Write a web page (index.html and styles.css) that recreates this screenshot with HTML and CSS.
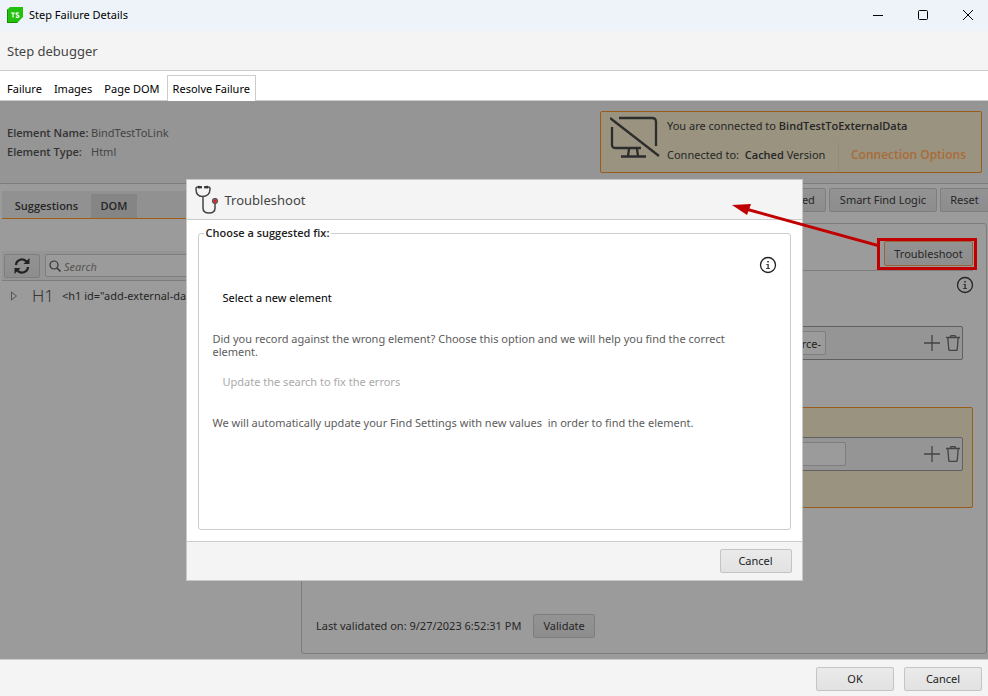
FILE: index.html
```html
<!DOCTYPE html>
<html lang="en">
<head>
<meta charset="utf-8">
<title>Step Failure Details</title>
<link rel="stylesheet" href="styles.css">
</head>
<body>
<svg class="defs" aria-hidden="true">
  <symbol id="info" viewBox="0 0 18 18"><circle cx="9" cy="9" r="7.5" fill="none" stroke="currentColor" stroke-width="1.3"/><path d="M8.300 5h1.500v1.500H8.300zM7.200 8h2.500v4.200h1.300v.8H7v-.8h1.500V8.800H7.200z" fill="currentColor"/></symbol>
  <symbol id="plus" viewBox="0 0 16 16"><path d="M8 0v16M0 8h16" stroke="currentColor" stroke-width="1.3"/></symbol>
  <symbol id="trash" viewBox="0 0 14 16"><path d="M0 2.500h14M4 2.500L5 .6h4l1 1.900M1.800 2.500l1 12.200q.1.700.8.700h6.800q.7 0 .8-.7l1-12.200" fill="none" stroke="currentColor" stroke-width="1.3"/></symbol>
</svg>

<header class="titlebar">
  <svg class="logo" viewBox="0 0 16 16" aria-hidden="true"><path d="M3 0h13v10l-6 6H0V3z" fill="#22c10b"/><path d="M0 3v13h10l1-1H1V2z" fill="#158a08"/><path d="M4 6h4M6 6v4.500" stroke="#fff" stroke-width="1.200"/><path d="M12 6.200c-1.200-.5-3-.5-3 .8s3 1 3 2.300-1.900 1.300-3.200.6" fill="none" stroke="#fff" stroke-width="1.200"/></svg>
  <h1 class="title">Step Failure Details</h1>
  <div class="window-buttons">
    <button type="button" aria-label="Minimize"><svg viewBox="0 0 12 12"><path d="M1 6.500h10"/></svg></button>
    <button type="button" aria-label="Maximize"><svg viewBox="0 0 12 12"><rect x="1.500" y="1.500" width="9" height="9" rx="1"/></svg></button>
    <button type="button" aria-label="Close"><svg viewBox="0 0 12 12"><path d="M1 1l10 10M11 1L1 11"/></svg></button>
  </div>
</header>
<h2 class="subtitle">Step debugger</h2>
<nav class="tabs">
  <button type="button" class="tab">Failure</button>
  <button type="button" class="tab">Images</button>
  <button type="button" class="tab">Page DOM</button>
  <button type="button" class="tab active">Resolve Failure</button>
</nav>

<main class="workspace">
  <section class="summary">
    <dl class="element-info">
      <dt>Element Name:</dt><dd>BindTestToLink</dd>
      <dt>Element Type:</dt><dd>Html</dd>
    </dl>
    <div class="connection">
      <svg class="monitor" viewBox="0 0 50 44" aria-hidden="true"><path d="M9 2h33q4 0 4 4v24M2 11v18q0 3 4 3h25M19 33l-1 7M27 33l1 7M11 40.500h25M0 2l49 38" fill="none" stroke="#2d2d2d" stroke-width="2.300"/></svg>
      <div class="connection-text">
        <p>You are connected to <b>BindTestToExternalData</b></p>
        <div class="connection-row">
          <p class="version">Connected to:&nbsp; <b>Cached</b> Version</p>
          <a class="options" href="#">Connection Options</a>
        </div>
      </div>
    </div>
  </section>

  <div class="columns">
    <section class="left">
      <div class="side-tabs">
        <button type="button" class="side-tab">Suggestions</button>
        <button type="button" class="side-tab selected">DOM</button>
      </div>
      <div class="search-bar">
        <button type="button" class="dim-button refresh" aria-label="Refresh"><svg viewBox="0 0 16 16"><path d="M2 7a6 6 0 0 1 10.500-3.500M14 9a6 6 0 0 1-10.500 3.500" fill="none" stroke="#222" stroke-width="2.300"/><path d="M15.500 0v6h-6zM.5 16v-6h6z" fill="#222"/></svg></button>
        <label class="search"><svg viewBox="0 0 12 12" aria-hidden="true"><circle cx="5" cy="5" r="4" fill="none" stroke="#333" stroke-width="1.200"/><path d="M8 8l3.500 3.500" stroke="#333" stroke-width="1.400"/></svg><input type="search" placeholder="Search" aria-label="Search"></label>
      </div>
      <div class="tree-row">
        <svg class="caret" viewBox="0 0 8 10" aria-hidden="true"><path d="M1.500 1v8L6.500 5z" fill="none" stroke="#555"/></svg>
        <span class="tag">H1</span>
        <span>&lt;h1 id="add-external-dat</span>
      </div>
    </section>

    <section class="right">
      <div class="toolbar">
        <button type="button" class="dim-button covered">ed</button>
        <button type="button" class="dim-button">Smart Find Logic</button>
        <button type="button" class="dim-button reset">Reset</button>
      </div>
      <div class="panel">
        <div class="panel-head">
          <div class="callout">
            <svg class="arrow" viewBox="0 0 150 50" aria-hidden="true"><path d="M150 46L14 8.500" stroke="#c00000" stroke-width="3"/><path d="M2 5l19-1-4 11z" fill="#c00000"/></svg>
            <button type="button" class="dim-button trouble">Troubleshoot</button>
          </div>
        </div>
        <svg class="info panel-info" role="img" aria-label="Information"><use href="#info"/></svg>
        <div class="rule first">
          <input type="text" value="rce-" aria-label="Attribute value">
          <button type="button" class="icon-button" aria-label="Add"><svg class="plus"><use href="#plus"/></svg></button>
          <button type="button" class="icon-button" aria-label="Delete"><svg class="trash"><use href="#trash"/></svg></button>
        </div>
        <div class="warning">
          <div class="rule second">
            <input type="text" aria-label="Text value">
            <button type="button" class="icon-button" aria-label="Add"><svg class="plus"><use href="#plus"/></svg></button>
            <button type="button" class="icon-button" aria-label="Delete"><svg class="trash"><use href="#trash"/></svg></button>
          </div>
        </div>
        <div class="validation">
          <span>Last validated on: 9/27/2023 6:52:31 PM</span>
          <button type="button" class="dim-button">Validate</button>
        </div>
      </div>
    </section>
  </div>

  <div class="overlay">
    <div class="dialog" role="dialog" aria-labelledby="dialog-title">
      <header class="dialog-head">
        <svg class="stethoscope" viewBox="0 0 24 30" aria-hidden="true"><path d="M5 2H2.500Q1 2 1 4c0 5 2.500 7.500 6.500 7.500S15 9 15 4q0-2-1.500-2H11M8 11.500V23c0 3 2 5 6 5s6-2 6-5v-4" fill="none" stroke="#444" stroke-width="1.500"/><path d="M3 .7l4 .5v2L3 3.500zM13 .7l-4 .5v2l4 .3z" fill="#333"/><circle cx="20" cy="16" r="2.700" fill="#777" stroke="#555"/><circle cx="20" cy="16" r="1.700" fill="#e02020"/></svg>
        <h2 id="dialog-title">Troubleshoot</h2>
      </header>
      <div class="dialog-body">
        <fieldset>
          <legend>Choose a suggested fix:</legend>
          <svg class="info dialog-info" role="img" aria-label="Information"><use href="#info"/></svg>
          <button type="button" class="choice">Select a new element</button>
          <p class="hint">Did you record against the wrong element? Choose this option and we will help you find the correct element.</p>
          <button type="button" class="choice" disabled>Update the search to fix the errors</button>
          <p class="hint">We will automatically update your Find Settings with new values&nbsp; in order to find the element.</p>
        </fieldset>
      </div>
      <footer class="dialog-foot"><button type="button" class="button small">Cancel</button></footer>
    </div>
  </div>
</main>

<footer class="window-foot">
  <button type="button" class="button">OK</button>
  <button type="button" class="button">Cancel</button>
</footer>
</body>
</html>
```
FILE: styles.css
```css
* { box-sizing: border-box; }
body {
  margin: 0;
  min-height: 100vh;
  display: flex;
  flex-direction: column;
  font: 11px/16px "Segoe UI", "Noto Sans", "Open Sans", sans-serif;
  color: #000;
  background: #f4f4f4;
}
h1, h2, p, dl, dd { margin: 0; font-weight: 400; }
button, input { font: inherit; color: inherit; }
button { padding: 0; border: 0; background: none; white-space: nowrap; }
b, dt, legend, .options, .side-tab { font-family: "Segoe UI", "Open Sans", sans-serif; font-weight: 600; }
svg { display: block; flex: none; }
.defs { position: absolute; width: 0; height: 0; }

.titlebar { display: flex; align-items: center; height: 31px; padding: 0 0 2px 7px; background: #eef3f9; }
.logo { width: 16px; height: 16px; }
.title { margin-left: 6px; font-size: 11px; }
.window-buttons { display: flex; margin-left: auto; }
.window-buttons button { display: grid; place-items: center; width: 45px; height: 28px; }
.window-buttons svg { width: 12px; height: 12px; fill: none; stroke: #000; }
.window-buttons button:last-child { width: 43px; padding-left: 3px; }
.subtitle { height: 40px; padding-left: 7px; line-height: 40px; font-size: 13px; color: #444; border-bottom: 1px solid #ccc; }
.tabs { display: flex; align-items: flex-end; height: 30px; background: #fff; border-bottom: 1px solid #ccc; }
.tab { height: 25px; padding: 1px 6px 0; border: 1px solid transparent; border-bottom: 0; margin-right: -2px; }
.tab.active { height: 26px; padding: 0 5px; margin: 0 0 -1px 2px; border-color: #ccc; background: #fff; }

.workspace { position: relative; flex: 1; display: flex; flex-direction: column; background: #9b9b9b; color: #262626; }
.summary { display: flex; justify-content: space-between; align-items: flex-start; height: 83px; padding: 10px 6px 0 7px; background: #959595; border-bottom: 1px solid #7d7d7d; }
.element-info { display: grid; grid-template-columns: 84px auto; row-gap: 3px; margin-top: 14px; color: #444; white-space: nowrap; }
dt { color: #333; }
.connection { display: flex; width: 382px; height: 62px; padding: 4px 0 0 9px; border: 1px solid #9a5c18; border-radius: 2px; background: #999380; }
.monitor { width: 50px; height: 44px; }
.connection-text { flex: 1; margin-left: 7px; padding-top: 2px; display: flex; flex-direction: column; justify-content: space-between; }
.connection-row { display: flex; height: 30px; line-height: 26px; }
.version { flex: 1; }
.options { padding: 0 15px 0 12px; font-size: 12px; color: #ab6b38; text-decoration: none; border-left: 1px solid #8e8c87; }

.columns { flex: 1; display: grid; grid-template-columns: 301px minmax(0, 1fr); }
.left { padding: 7px 2px 0; }
.side-tabs { display: flex; align-items: flex-end; height: 28px; background: #919191; border-bottom: 1px solid #a05c14; }
.side-tab { width: 46px; height: 24px; }
.side-tab:first-child { width: 89px; }
.side-tab.selected { background: #858585; }
.search-bar { display: flex; gap: 5px; height: 30px; margin-top: 32px; padding: 3px 117px 2px 2px; background: #959595; border-bottom: 1px solid #7d7d7d; }
.dim-button { height: 24px; padding: 0 9px; border: 1px solid #7e7e7e; border-radius: 2px; background: linear-gradient(#939393, #8d8d8d); }
.toolbar .dim-button { padding: 0 10px; }
.refresh { display: grid; place-items: center; width: 36px; }
.refresh svg { width: 16px; height: 16px; }
.search { display: flex; align-items: center; flex: 1; height: 23px; padding-left: 3px; border: 1px solid #7e7e7e; border-radius: 2px; background: #9b9b9b; }
.search svg { width: 12px; height: 12px; }
.search input { flex: 1; min-width: 0; border: 0; background: none; outline: 0; padding: 2px 3px 0; }
.search input::placeholder { color: #555; font-style: italic; }
.tree-row { display: flex; align-items: center; height: 30px; padding-left: 8px; white-space: nowrap; overflow: hidden; }
.caret { width: 8px; height: 10px; }
.tag { margin: 0 8px 0 14px; font-family: "Segoe UI", "Open Sans", sans-serif; font-size: 17px; font-weight: 300; }

.right { display: flex; flex-direction: column; padding-top: 4px; }
.toolbar { display: flex; justify-content: flex-end; gap: 3px; }
.covered { width: 60px; text-align: right; }
.toolbar .reset { width: 48px; padding: 0; border-right: 0; border-radius: 2px 0 0 2px; }
.panel { flex: 1; display: flex; flex-direction: column; margin: 11px 1px 5px 0; padding: 14px 13px 15px 14px; border: 1px solid #7d7d7d; border-radius: 3px; }
.panel-head { display: flex; justify-content: flex-end; border-bottom: 1px solid #7d7d7d; }
.callout { position: relative; z-index: 2; margin-right: -4px; padding: 0 1px 1px 4px; border: 3px solid #c00000; background: #999; }
.arrow { position: absolute; right: 100%; bottom: 17px; width: 150px; height: 50px; }
.trouble { display: block; width: 89px; height: 25px; padding: 0; border-color: #99643c; }
.info { width: 18px; height: 18px; }
.panel-info { align-self: flex-end; margin: 5px -1px 0 0; }
.rule { display: flex; align-items: center; height: 34px; margin-right: 10px; padding: 0 2px 0 8px; border: 1px solid #606060; border-radius: 2px; background: #959595; color: #444; }
.rule input { flex: 1; height: 24px; min-width: 0; padding: 0 4px; border: 1px solid #7e7e7e; border-radius: 2px; background: #9b9b9b; text-align: right; color: #222; }
.rule.first { margin-top: 32px; }
.rule.first input { margin-right: 98px; }
.rule.second { margin-right: 9px; }
.rule.second input { margin-right: 78px; }
.plus { width: 16px; height: 16px; }
.trash { width: 14px; height: 16px; }
.icon-button + .icon-button { margin-left: 6px; }
.warning { height: 101px; margin-top: 47px; padding: 29px 0 0 9px; border: 1px solid #9a5c18; border-radius: 2px; background: #999380; }
.validation { display: flex; align-items: center; gap: 12px; margin-top: auto; }

.overlay { position: absolute; inset: 0; z-index: 1; display: flex; align-items: center; justify-content: center; }
.dialog { width: 617px; max-width: 100%; border: 1px solid #c8c8c8; background: #fff; color: #000; }
.dialog-head { display: flex; align-items: center; gap: 6px; height: 40px; padding-left: 8px; background: #f4f4f4; border-bottom: 1px solid #ccc; }
.dialog-head h2 { font-size: 13px; color: #444; }
.stethoscope { width: 24px; height: 30px; }
.dialog-body { padding: 5px 11px 11px; }
fieldset { min-height: 305px; margin: 0; padding: 15px 13px 0 14px; border: 1px solid #ccc; border-radius: 3px; }
legend { margin-left: -9px; padding: 0 2px; color: #222; }
.dialog-info { margin-left: auto; color: #222; }
.choice { display: block; height: 24px; margin: 12px 0 0 10px; }
.choice:disabled { color: #aaa; }
.hint { margin: 22px 32px 0 0; line-height: 13px; color: #5c5c5c; }
.dialog-foot { display: flex; justify-content: flex-end; height: 39px; padding: 7px 10px; background: #f4f4f4; border-top: 1px solid #ccc; }
.button { width: 78px; height: 24px; color: #222; border: 1px solid #c4c4c4; border-radius: 2px; background: linear-gradient(#eaeaea, #e2e2e2); }
.button.small { width: 72px; }
.window-foot { display: flex; justify-content: flex-end; gap: 10px; height: 37px; padding: 7px 6px; border-top: 1px solid #ccc; }
```
